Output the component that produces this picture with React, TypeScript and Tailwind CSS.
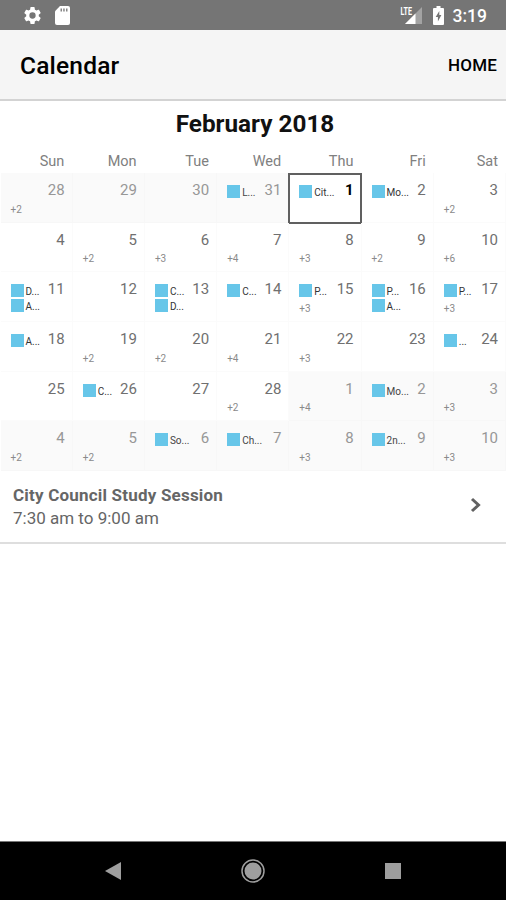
import clsx from "clsx";

type Day = {
  date: number;
  events?: string[];
  more?: number;
  outside?: boolean;
  selected?: boolean;
};

const WEEKDAYS = ["Sun", "Mon", "Tue", "Wed", "Thu", "Fri", "Sat"];

const WEEKS: Day[][] = [
  [
    { date: 28, more: 2, outside: true },
    { date: 29, outside: true },
    { date: 30, outside: true },
    { date: 31, events: ["L..."], outside: true },
    { date: 1, events: ["Cit..."], selected: true },
    { date: 2, events: ["Mo..."] },
    { date: 3, more: 2 },
  ],
  [
    { date: 4 },
    { date: 5, more: 2 },
    { date: 6, more: 3 },
    { date: 7, more: 4 },
    { date: 8, more: 3 },
    { date: 9, more: 2 },
    { date: 10, more: 6 },
  ],
  [
    { date: 11, events: ["D...", "A..."] },
    { date: 12 },
    { date: 13, events: ["C...", "D..."] },
    { date: 14, events: ["C..."] },
    { date: 15, events: ["P..."], more: 3 },
    { date: 16, events: ["P...", "A..."] },
    { date: 17, events: ["P..."], more: 3 },
  ],
  [
    { date: 18, events: ["A..."] },
    { date: 19, more: 2 },
    { date: 20, more: 2 },
    { date: 21, more: 4 },
    { date: 22, more: 3 },
    { date: 23 },
    { date: 24, events: ["..."] },
  ],
  [
    { date: 25 },
    { date: 26, events: ["C..."] },
    { date: 27 },
    { date: 28, more: 2 },
    { date: 1, more: 4, outside: true },
    { date: 2, events: ["Mo..."], outside: true },
    { date: 3, more: 3, outside: true },
  ],
  [
    { date: 4, more: 2, outside: true },
    { date: 5, more: 2, outside: true },
    { date: 6, events: ["So..."], outside: true },
    { date: 7, events: ["Ch..."], outside: true },
    { date: 8, more: 3, outside: true },
    { date: 9, events: ["2n..."], outside: true },
    { date: 10, more: 3, outside: true },
  ],
];

function StatusBar() {
  return (
    <div className="flex h-[30px] shrink-0 items-center justify-between bg-[#757575] pr-[19px] pl-[22px] text-white">
      <div className="flex items-center gap-[11px]">
        <svg className="h-[21px] w-[21px]" viewBox="0 0 24 24" fill="currentColor">
          <path d="M19.14 12.94c.04-.3.06-.61.06-.94s-.02-.64-.07-.94l2.03-1.58a.49.49 0 0 0 .12-.61l-1.92-3.32a.49.49 0 0 0-.59-.22l-2.39.96a7 7 0 0 0-1.62-.94l-.36-2.54a.48.48 0 0 0-.48-.41h-3.84a.47.47 0 0 0-.47.41l-.36 2.54c-.59.24-1.13.57-1.62.94l-2.39-.96a.48.48 0 0 0-.59.22L2.74 8.87a.47.47 0 0 0 .12.61l2.03 1.58c-.05.3-.09.63-.09.94s.02.64.07.94l-2.03 1.58a.49.49 0 0 0-.12.61l1.92 3.32c.12.22.37.29.59.22l2.39-.96c.5.38 1.03.7 1.62.94l.36 2.54c.05.24.24.41.48.41h3.84c.24 0 .44-.17.47-.41l.36-2.54a6.8 6.8 0 0 0 1.62-.94l2.39.96c.22.08.47 0 .59-.22l1.92-3.32a.47.47 0 0 0-.12-.61zM12 15.6a3.6 3.6 0 1 1 0-7.2 3.6 3.6 0 0 1 0 7.2z" />
        </svg>
        <svg className="h-[19px] w-4" viewBox="0 0 16 19">
          <path d="M6 0h8a2 2 0 0 1 2 2v15a2 2 0 0 1-2 2H3a2 2 0 0 1-2-2V5.3z" fill="currentColor" />
          <path d="M6.500 2.500H8v3H6.500zM9.200 2.500h1.500v3H9.200zM12 2.500h1.500v3H12z" fill="#858585" />
        </svg>
      </div>
      <div className="flex items-center">
        <svg className="h-[20px] w-[23px]" viewBox="0 0 23 20">
          <path d="M22 2v17H5z" fill="#a3a3a3" />
          <path d="M15.500 8.500V19H5z" fill="#fff" />
          <path d="M0 0h12.500v10H0z" fill="#757575" />
          <text x="0.500" y="9.500" fontSize="10.500" fontWeight="700" textLength="11.500" lengthAdjust="spacingAndGlyphs" fill="#fff">
            LTE
          </text>
        </svg>
        <svg className="ml-[10px] h-[19px] w-[11px]" viewBox="0 0 11 19">
          <path d="M3.500 0h4v2H10a1 1 0 0 1 1 1v15a1 1 0 0 1-1 1H1a1 1 0 0 1-1-1V3a1 1 0 0 1 1-1h2.500z" fill="#fff" />
          <path d="M6.300 5 2.700 11h2.200v4.500l3.500-6.500H6.300z" fill="#757575" />
        </svg>
        <span className="ml-[9px] pt-[2px] text-[17.500px] leading-[28px] font-medium">3:19</span>
      </div>
    </div>
  );
}

function DayCell({ date, events = [], more, outside, selected }: Day) {
  return (
    <div
      className={clsx(
        "relative min-w-0 border-r border-b",
        outside ? "border-[#f7f7f7] bg-[#fafafa]" : "border-[#fbfbfb]",
      )}
    >
      {selected && <div className="absolute -right-[1.500px] -bottom-0.5 -left-px top-0 border-2 border-[#606060]" />}
      <div className="flex justify-between pr-[7px] pl-[10px]">
        <div className="flex flex-col gap-[2px] pt-[12px]">
          {events.map((event) => (
            <div key={event} className="flex h-[13px] items-center gap-[2px]">
              <span className="size-[13px] bg-[#67c6e9]" />
              <span className={clsx("pt-[2px] text-[10px] leading-[13px]", outside ? "text-[#444]" : "text-[#333]")}>
                {event}
              </span>
            </div>
          ))}
        </div>
        <span
          className={clsx(
            "pt-[7px] text-[15px] leading-5",
            selected ? "font-bold text-black" : outside ? "text-[#979797]" : "text-[#707070]",
          )}
        >
          {date}
        </span>
      </div>
      {more && (
        <span className="absolute top-[30.500px] left-[10px] text-[10px] leading-3 text-[#8a8a8a]">+{more}</span>
      )}
    </div>
  );
}

export default function App() {
  return (
    <div className="flex h-[900px] w-[506px] flex-col overflow-hidden bg-white font-['Roboto',sans-serif]">
      <StatusBar />
      <header className="flex h-[71px] shrink-0 items-center justify-between border-b-2 border-[#d3d3d3] bg-[#f5f5f5] pr-[9px] pl-5 text-black">
        <h1 className="pt-[3px] text-[24.500px] leading-8 font-medium tracking-[0.2px]">Calendar</h1>
        <span className="pt-px text-[17px] leading-6 font-medium tracking-[0.2px]">HOME</span>
      </header>

      <h2 className="h-[50px] shrink-0 pl-1 text-center text-[24.300px] leading-[46px] font-bold text-[#111]">
        February 2018
      </h2>
      <div className="grid h-[22px] shrink-0 grid-cols-7">
        {WEEKDAYS.map((day) => (
          <span key={day} className="pr-2 text-right text-[14.500px] leading-[22px] text-[#808080]">
            {day}
          </span>
        ))}
      </div>
      <div className="grid h-[298px] shrink-0 grid-cols-7 grid-rows-6 pl-[0.500px]">
        {WEEKS.flat().map((day, i) => (
          <DayCell key={i} {...day} />
        ))}
      </div>

      <div className="flex h-[73px] shrink-0 items-center justify-between border-b-2 border-[#dedede] pr-[24px] pl-[13px] text-[17px] leading-[23px] text-[#666]">
        <div>
          <p className="font-bold tracking-[0.2px]">City Council Study Session</p>
          <p>7:30 am to 9:00 am</p>
        </div>
        <svg className="mb-[4px] h-4 w-3" viewBox="0 0 12 16" fill="none" stroke="#616161" strokeWidth="3">
          <path d="m2 2 6.500 6L2 14" />
        </svg>
      </div>

      <div className="mt-auto grid h-[59px] shrink-0 grid-cols-[1fr_24px_1fr] items-center border-t border-[#777] bg-black px-[105px]">
        <svg className="h-[18px] w-4" viewBox="0 0 16 18">
          <path d="M16 0v18L0 9z" fill="#9e9e9e" />
        </svg>
        <svg className="size-6" viewBox="0 0 24 24" fill="none" stroke="#9e9e9e">
          <circle cx="12" cy="12" r="11" strokeWidth="1.500" />
          <circle cx="12" cy="12" r="8.500" fill="#9e9e9e" stroke="none" />
        </svg>
        <span className="size-4 justify-self-end bg-[#9e9e9e]" />
      </div>
    </div>
  );
}
